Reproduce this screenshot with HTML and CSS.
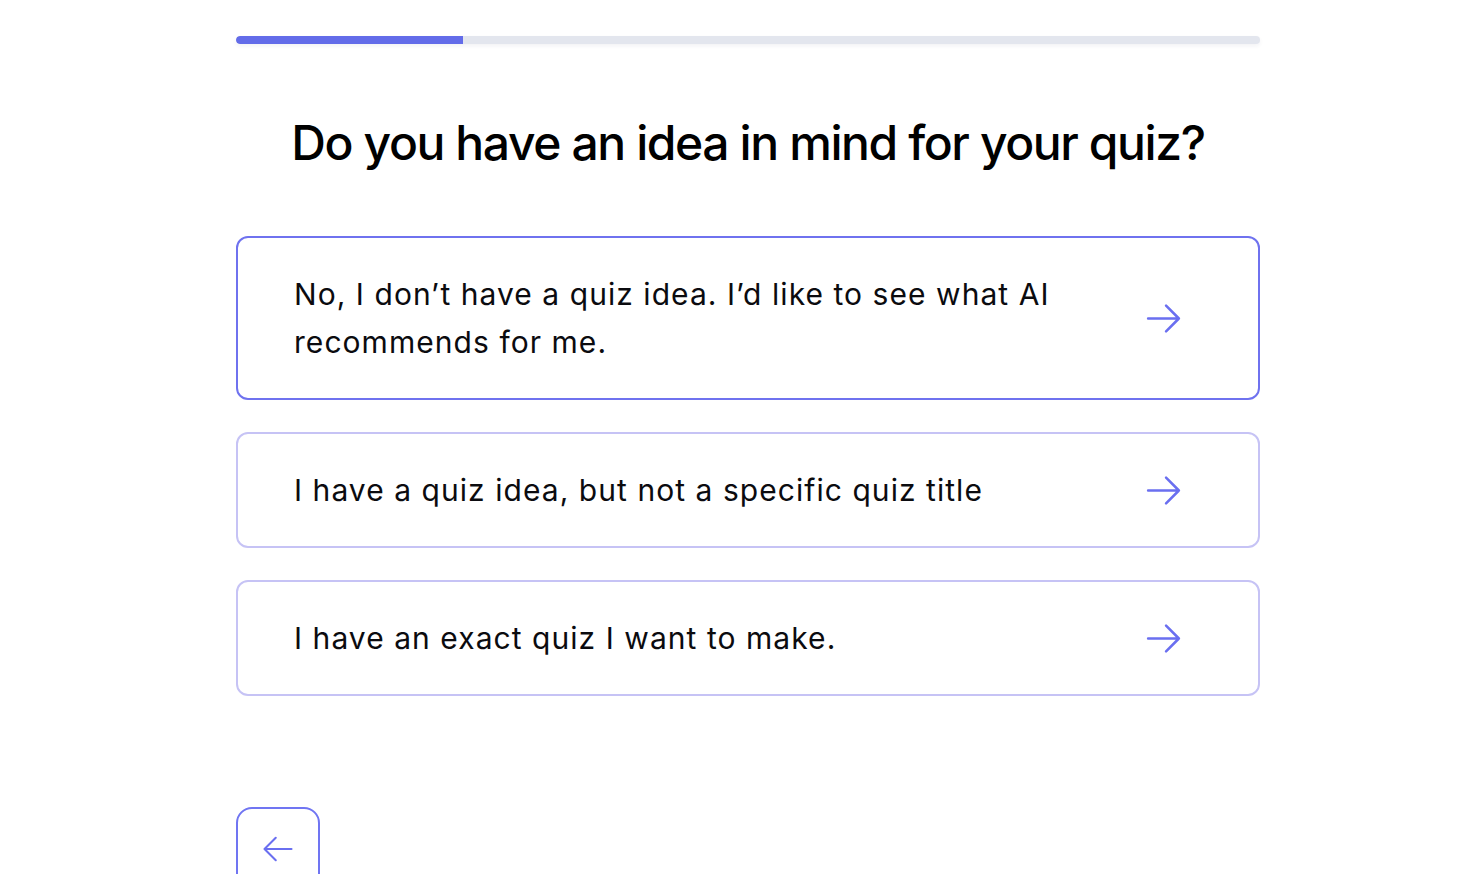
FILE: index.html
```html
<!DOCTYPE html>
<html lang="en">
<head>
<meta charset="utf-8">
<title>Quiz idea</title>
<link rel="stylesheet" href="styles.css">
</head>
<body>
<div class="shell">
<main class="page">
  <div class="progress"><div class="progress-fill" style="width:22.2%"></div></div>
  <h1 class="title">Do you have an idea in mind for your quiz?</h1>
  <div class="options">
    <button class="option option-active">
      <span class="option-text">No, I don’t have a quiz idea. I’d like to see what AI recommends for me.</span>
      <svg class="arrow" viewBox="0 0 24 24" fill="none" stroke="currentColor" stroke-width="1.5" stroke-linecap="round" stroke-linejoin="round"><path d="M13.5 4.5 21 12m0 0-7.5 7.5M21 12H3"/></svg>
    </button>
    <button class="option">
      <span class="option-text">I have a quiz idea, but not a specific quiz title</span>
      <svg class="arrow" viewBox="0 0 24 24" fill="none" stroke="currentColor" stroke-width="1.5" stroke-linecap="round" stroke-linejoin="round"><path d="M13.5 4.5 21 12m0 0-7.5 7.5M21 12H3"/></svg>
    </button>
    <button class="option">
      <span class="option-text">I have an exact quiz I want to make.</span>
      <svg class="arrow" viewBox="0 0 24 24" fill="none" stroke="currentColor" stroke-width="1.5" stroke-linecap="round" stroke-linejoin="round"><path d="M13.5 4.5 21 12m0 0-7.5 7.5M21 12H3"/></svg>
    </button>
  </div>
  <div class="nav">
    <button class="back">
      <svg class="back-arrow" viewBox="0 0 24 24" fill="none" stroke="currentColor" stroke-width="1.4" stroke-linecap="round" stroke-linejoin="round"><path d="M10.5 19.5 3 12m0 0 7.5-7.5M3 12h18"/></svg>
    </button>
  </div>
</main>
</div>
</body>
</html>
```

FILE: styles.css
```css
* { box-sizing: border-box; }
html, body { margin: 0; padding: 0; background: #ffffff; }
body { font-family: Inter, "Noto Sans", sans-serif; color: #0b0b0f; }

.shell {
  padding-left: 34px;
}

.page {
  width: 1024px;
  margin: 0 auto;
  padding-top: 36px;
}

.progress {
  height: 8px;
  background: #e3e6ee;
  border-radius: 4px;
  box-shadow: 0 2px 4px rgba(30, 40, 90, 0.06);
  overflow: hidden;
}
.progress-fill {
  height: 100%;
  background: #636ce9;
  border-radius: 4px 0 0 4px;
}

.title {
  margin: 70px 0 64px;
  text-align: center;
  font-size: 48px;
  line-height: 58px;
  font-weight: 500;
  letter-spacing: -1.4px;
  color: #000;
}

.options {
  display: flex;
  flex-direction: column;
  gap: 32px;
}

.option {
  display: flex;
  align-items: center;
  gap: 40px;
  width: 100%;
  padding: 32px 74px 32px 56px;
  background: #fff;
  border: 2px solid #c6c3f5;
  border-radius: 12px;
  text-align: left;
  font-family: inherit;
  cursor: pointer;
}
.option-active { border-color: #6f72ef; }

.option-text {
  flex: 1;
  font-size: 30px;
  line-height: 48px;
  font-weight: 400;
  color: #0b0b0f;
  letter-spacing: 1.05px;
}

.arrow {
  width: 41px;
  height: 41px;
  flex: none;
  color: #6a6ff0;
}

.nav {
  margin-top: 111px;
  display: flex;
}

.back {
  width: 84px;
  height: 84px;
  display: flex;
  align-items: center;
  justify-content: center;
  background: #fff;
  border: 2px solid #7075f2;
  border-radius: 16px;
  padding: 0;
  cursor: pointer;
}
.back-arrow {
  width: 36px;
  height: 36px;
  color: #6a6ff0;
}
```
